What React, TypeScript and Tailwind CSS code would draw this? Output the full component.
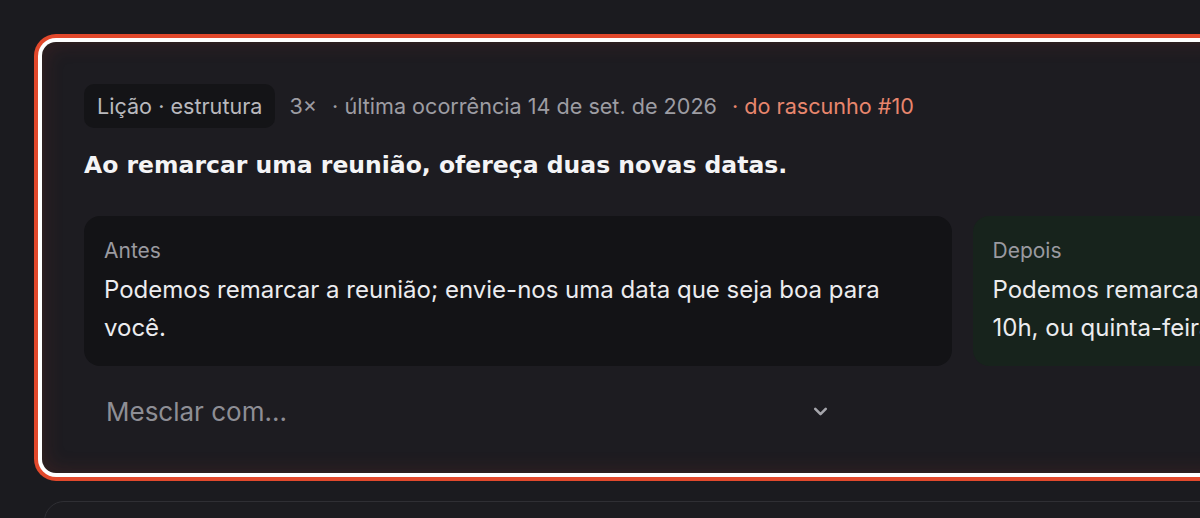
import { ChevronDown } from "lucide-react";

const inter = { fontFamily: "Inter, 'Noto Sans', sans-serif" };

function Panel({ label, text, tone }: { label: string; text: string; tone: "before" | "after" }) {
  return (
    <div
      className={
        "rounded-[16px] px-5 pt-[20px] pb-[19px] " +
        (tone === "before" ? "bg-[#131316]" : "bg-[#17231c]")
      }
    >
      <div className="text-[21px] leading-[30px] text-[#9a9aa0]">{label}</div>
      <p
        className={
          "mt-[5px] text-[24px] leading-[38px] text-[#ececef] " +
          (tone === "after" ? "max-w-[780px]" : "")
        }
      >
        {text}
      </p>
    </div>
  );
}

export default function App() {
  return (
    <div className="h-[518px] w-[1200px] overflow-hidden bg-[#1b1b1f]" style={inter}>
      <div className="pl-[44px] pt-[44px]">
        {/* focused lesson card */}
        <div className="w-[1836px] rounded-[12px] bg-[#1d1c21] px-10 pt-10 pb-[37px] shadow-[0_0_0_2px_#2c1f1f,0_0_0_6px_#ffffff,0_0_0_10px_#e2492c,inset_0_0_20px_rgba(150,50,40,0.2)]">
          <div className="flex items-center text-[21.6px] text-[#9d9da3]">
            <span className="flex h-[44px] items-center rounded-[10px] bg-[#141417] px-[13px] text-[#b9b9be]">
              Lição · estrutura
            </span>
            <span className="ml-[14px]">3×</span>
            <span className="ml-[15px]">· última ocorrência 14 de set. de 2026</span>
            <span className="ml-[15px] text-[#e8866d]">· do rascunho #10</span>
          </div>

          <h2
            className="mt-[19px] text-[23.5px] font-bold leading-[36px] text-[#f4f4f6]"
            style={{ fontFamily: "'DejaVu Sans', 'Noto Sans', sans-serif" }}
          >
            Ao remarcar uma reunião, ofereça duas novas datas.
          </h2>

          <div className="mt-[33px] grid grid-cols-2 gap-[21px]">
            <Panel
              tone="before"
              label="Antes"
              text="Podemos remarcar a reunião; envie-nos uma data que seja boa para você."
            />
            <Panel
              tone="after"
              label="Depois"
              text="Podemos remarcar a reunião para a próxima terça-feira, dia 16, às 10h, ou quinta-feira, dia 18, às 15h."
            />
          </div>

          <div className="mt-[22px] flex h-[46px] w-[756px] items-center justify-between pl-[22px] pr-[9px]">
            <span className="text-[26px] text-[#8e8e95]">Mesclar com...</span>
            <ChevronDown className="h-[21px] w-[21px] text-[#a5a5ab]" strokeWidth={3} />
          </div>
        </div>

        {/* next card */}
        <div className="mt-[30px] h-[60px] w-[1836px] rounded-[20px] border border-[#2f2f34] bg-[#1c1c20]" />
      </div>
    </div>
  );
}
